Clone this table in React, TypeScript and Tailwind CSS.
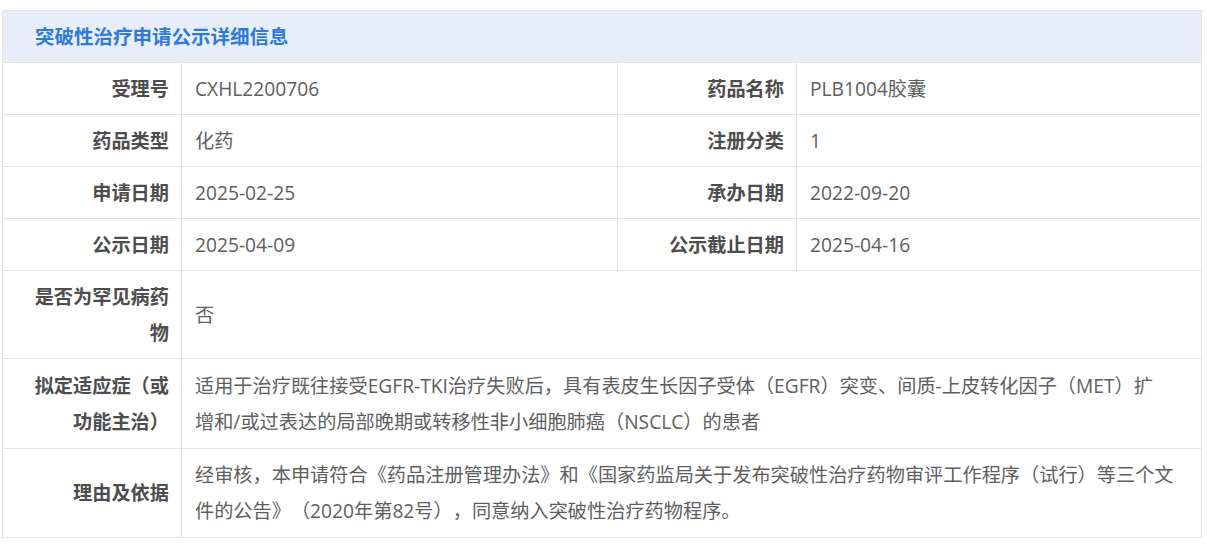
import React from "react";

const font = {
  fontFamily: '"Open Sans", "Noto Sans CJK SC", sans-serif',
};

function Label({ children }: { children: React.ReactNode }) {
  return (
    <div className="flex items-center justify-end pr-3 pl-2 text-right font-bold text-[#4d4d4d] leading-9 border-r border-[#e4e4e4]">
      <div>{children}</div>
    </div>
  );
}

function Value({ children, last = false }: { children: React.ReactNode; last?: boolean }) {
  return (
    <div
      className={`flex items-center pl-[13px] pr-3 text-[#5e5e5e] leading-9 ${last ? "" : "border-r border-[#e4e4e4]"}`}
    >
      <div>{children}</div>
    </div>
  );
}

export default function App() {
  const rows: [string, string, string, string][] = [
    ["受理号", "CXHL2200706", "药品名称", "PLB1004胶囊"],
    ["药品类型", "化药", "注册分类", "1"],
    ["申请日期", "2025-02-25", "承办日期", "2022-09-20"],
    ["公示日期", "2025-04-09", "公示截止日期", "2025-04-16"],
  ];
  return (
    <div className="bg-white min-h-[545px] pt-[10px] pl-[2px] [text-spacing-trim:space-all]" style={font}>
      <div className="w-[1200px] border border-[#e4e4e4] text-[19.2px]">
        <div className="h-[52px] border-b border-[#e4e4e4] bg-[#e8eef9] flex items-center pl-8 font-bold text-[19.5px] text-[#2d7ad8]">
          突破性治疗申请公示详细信息
        </div>
        {rows.map((r, i) => (
          <div key={i} className="grid grid-cols-[179px_436px_179px_1fr] h-[52px] border-b border-[#e4e4e4]">
            <Label>{r[0]}</Label>
            <Value>{r[1]}</Value>
            <Label>{r[2]}</Label>
            <Value last>{r[3]}</Value>
          </div>
        ))}
        <div className="grid grid-cols-[179px_1fr] h-[88px] border-b border-[#e4e4e4]">
          <Label>
            是否为罕见病药
            <br />
            物
          </Label>
          <Value last>否</Value>
        </div>
        <div className="grid grid-cols-[179px_1fr] h-[90px] border-b border-[#e4e4e4]">
          <Label>
            拟定适应症（或
            <br />
            功能主治）
          </Label>
          <Value last>
            适用于治疗既往接受EGFR-TKI治疗失败后，具有表皮生长因子受体（EGFR）突变、间质-上皮转化因子（MET）扩
            <br />
            增和/或过表达的局部晚期或转移性非小细胞肺癌（NSCLC）的患者
          </Value>
        </div>
        <div className="grid grid-cols-[179px_1fr] h-[88px]">
          <Label>理由及依据</Label>
          <Value last>
            经审核，本申请符合《药品注册管理办法》和《国家药监局关于发布突破性治疗药物审评工作程序（试行）等三个文
            <br />
            件的公告》（2020年第82号），同意纳入突破性治疗药物程序。
          </Value>
        </div>
      </div>
    </div>
  );
}
